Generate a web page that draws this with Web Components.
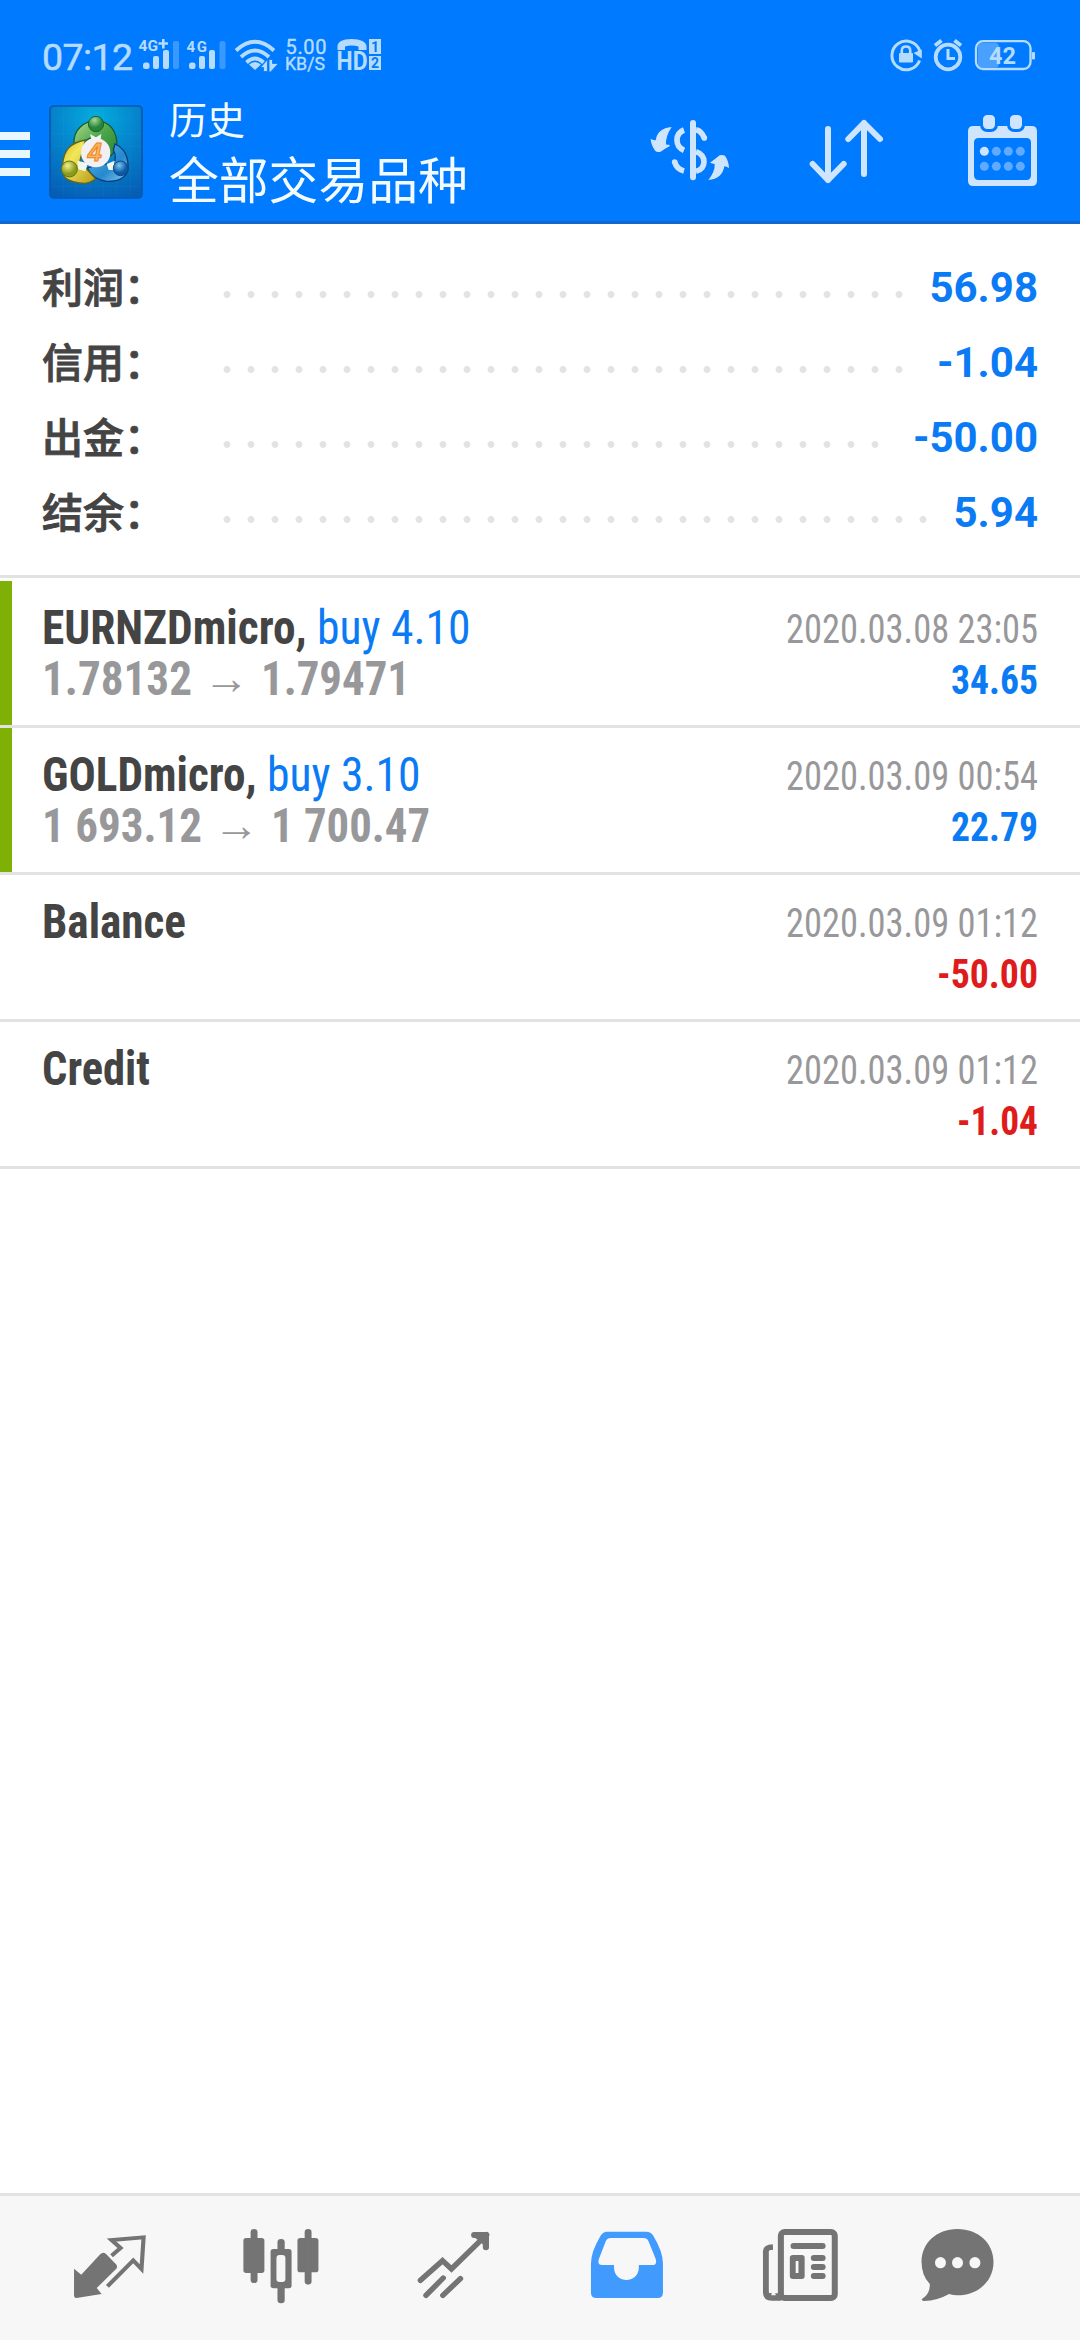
<!DOCTYPE html>
<html lang="zh-CN">
<head>
<meta charset="utf-8">
<title>历史</title>
<style>
html,body{margin:0;padding:0;background:#fff}
body{width:1080px;height:2340px;overflow:hidden;font-family:Roboto,"Noto Sans CJK SC",sans-serif}
</style>
</head>
<body>
<history-app></history-app>
<script>
const mount=(el,html)=>{el.attachShadow({mode:'open'}).innerHTML=html;};

customElements.define('status-bar',class extends HTMLElement{
constructor(){super();mount(this,`<style>
:host{display:flex;height:90px;color:#b5dcff;font-family:Roboto,sans-serif}
svg{display:block;height:90px;flex:none}
.gap{flex:1}
text{font-family:Roboto,sans-serif;fill:currentColor}
</style>
<svg width="136" viewBox="0 0 136 90"><text x="42" y="69.5" font-size="37.5" textLength="91" stroke="currentColor" stroke-width=".5">07:12</text></svg>
<svg width="48" viewBox="136 0 48 90" fill="currentColor"><text x="138.5" y="51" font-size="15" font-weight="700" textLength="19.500" lengthAdjust="spacingAndGlyphs">4G</text><path d="M158.500 43.500H168M163.300 39V48.500" stroke="currentColor" stroke-width="2.600"/>
<rect x="143" y="62.5" width="6.5" height="6.5" rx="2.5"/><rect x="153" y="56" width="6" height="13" rx="2"/><rect x="163" y="50" width="6" height="19" rx="2"/><rect x="173" y="41" width="6" height="28" rx="2" fill="#3a99ff"/></svg>
<svg width="47" viewBox="184 0 47 90" fill="currentColor"><text x="186.500" y="51.500" font-size="15" font-weight="700" textLength="20.500">4G</text>
<rect x="189" y="62.500" width="6.500" height="6.500" rx="2.500"/><rect x="199" y="56" width="6" height="13" rx="2"/><rect x="209" y="50" width="6" height="19" rx="2"/><rect x="219.500" y="41" width="6" height="28" rx="2" fill="#3a99ff"/></svg>
<svg width="52" viewBox="231 0 52 90" fill="none" stroke="currentColor" stroke-width="3.800"><path d="M236 50.500Q255 33 274 50.500M241 57Q255 44 269 57M246.500 62.500Q255 54.500 263.500 62.500"/><path d="M249 64.500Q255 59.500 261 64.500L255 70Z" fill="currentColor" stroke="none"/><path d="M260.500 67.500L267.500 59.500V71.500H263.500V67.500ZM269 59.500H272.500V63.500H278.500L270.500 72H269Z" fill="currentColor" stroke="#007aff" stroke-width=".8"/></svg>
<svg width="51" viewBox="283 0 51 90"><text x="285.500" y="53.500" font-size="20" textLength="41" stroke="currentColor" stroke-width=".4">5.00</text><text x="285" y="70" font-size="18" textLength="40" lengthAdjust="spacingAndGlyphs" stroke="currentColor" stroke-width=".4">KB/S</text></svg>
<svg width="60" viewBox="334 0 60 90" fill="currentColor"><path d="M337.500 50V46C338 42 342 39 351.500 39S366 42 366.500 46V50H358.500V46.500Q351.500 44.500 345 46.500V50Z"/>
<text x="336.500" y="70" font-size="25" font-weight="700" textLength="31" lengthAdjust="spacingAndGlyphs">HD</text><rect x="369" y="39" width="12" height="15"/><rect x="369" y="56" width="12" height="14"/><text x="371" y="51.500" font-size="14" font-weight="700" style="fill:#007aff">1</text><text x="371" y="68" font-size="14" font-weight="700" style="fill:#007aff">2</text></svg>
<div class="gap"></div>
<svg width="40" viewBox="886 0 40 90" fill="none" stroke="currentColor" stroke-width="3"><path d="M919.800 51A14.300 14.300 0 1 0 919.600 60.500"/><path d="M913.500 53L921.800 58.500V49.500Z" fill="currentColor" stroke="none"/><rect x="899" y="53" width="14" height="9.500" rx="1" fill="currentColor" stroke="none"/><path d="M901.800 54V50.500Q901.800 46.500 906 46.500T910.200 50.500V54" stroke-width="2.600"/></svg>
<svg width="44" viewBox="926 0 44 90" fill="none" stroke="currentColor" stroke-width="3.800"><circle cx="948" cy="57" r="12.300"/><path d="M935 45.500L941.500 40.500M954.500 40.500L961 45.500"/><path d="M948 49V58.500H955" stroke-width="3"/></svg>
<svg width="110" viewBox="970 0 110 90"><rect x="978" y="43" width="21" height="24.500" rx="4" fill="#4aa0ff"/><rect x="976" y="41.200" width="54.500" height="27.800" rx="7" fill="none" stroke="currentColor" stroke-width="2.300"/><rect x="1032" y="52" width="3" height="7.500" rx="1" fill="currentColor"/><text x="989" y="64" font-size="23" font-weight="700" textLength="27" lengthAdjust="spacingAndGlyphs">42</text></svg>`);}
});

customElements.define('app-logo',class extends HTMLElement{
constructor(){super();mount(this,`<style>:host{display:block;width:94px;height:94px}svg{display:block}</style>
<svg width="94" height="94" viewBox="147 45 282 282">
<defs><radialGradient id="b" cx=".5" cy=".12" r=".95"><stop offset="0" stop-color="#05addf"/><stop offset=".45" stop-color="#0486cd"/><stop offset="1" stop-color="#055db5"/></radialGradient>
<linearGradient id="g" x2="1" y2="1"><stop offset="0" stop-color="#b4dc91"/><stop offset=".5" stop-color="#4ca64a"/><stop offset="1" stop-color="#2b8134"/></linearGradient>
<linearGradient id="y" x2="1" y2="1"><stop offset="0" stop-color="#d0ba20"/><stop offset=".35" stop-color="#f2e75b"/><stop offset="1" stop-color="#b59b17"/></linearGradient>
<linearGradient id="u" x2="1" y2="1"><stop offset="0" stop-color="#58b7ea"/><stop offset=".6" stop-color="#2788ce"/><stop offset="1" stop-color="#81cbf0"/></linearGradient>
<radialGradient id="gh" cx=".4" cy=".25"><stop offset="0" stop-color="#a9d99b"/><stop offset="1" stop-color="#27853a"/></radialGradient>
<radialGradient id="yh" cx=".4" cy=".3"><stop offset="0" stop-color="#f6f08a"/><stop offset="1" stop-color="#8a9b1c"/></radialGradient>
<radialGradient id="uh" cx=".4" cy=".3"><stop offset="0" stop-color="#7dc7f0"/><stop offset="1" stop-color="#0b5aa5"/></radialGradient></defs>
<rect x="150" y="48" width="276" height="276" rx="12" fill="url(#b)" stroke="#0759a8" stroke-width="5"/>
<path d="M190 52V320M230 52V320M270 52V320M310 52V320M350 52V320M390 52V320M154 90H422M154 130H422M154 170H422M154 210H422M154 250H422M154 290H422" stroke="#fff" stroke-opacity=".06" stroke-width="2"/>
<path d="M222 160C220 120 250 94 288 92C330 94 354 125 350 172Q340 196 318 206L300 145Q270 135 246 162Z" fill="url(#g)" stroke="#165d31" stroke-width="4"/>
<path d="M345 162C378 176 386 205 384 240Q372 276 320 274Q280 270 262 234L300 220L340 225Q352 200 340 180Z" fill="url(#u)" stroke="#0a3f78" stroke-width="4"/>
<path d="M256 150C212 158 190 180 188 225L194 262Q214 280 256 280Q276 276 286 266L250 226L240 212Z" fill="url(#y)" stroke="#65651a" stroke-width="4"/>
<path d="M232 212L264 220L256 244L235 238ZM320 222L344 212L340 240L326 240ZM270 132L288 142L304 132L302 148H274Z" fill="#eef8ef"/>
<circle cx="288" cy="102" r="23" fill="url(#gh)" stroke="#16652e" stroke-width="3"/>
<circle cx="208" cy="237" r="24" fill="url(#yh)" stroke="#647019" stroke-width="3"/>
<circle cx="362" cy="235" r="22" fill="url(#uh)" stroke="#0a4b8f" stroke-width="3"/>
<circle cx="287" cy="188" r="44" fill="#f3f0f3"/>
<text x="263" y="214" font-family="Liberation Sans,sans-serif" font-size="76" font-weight="700" font-style="italic" fill="#fab65a" stroke="#ee8325" stroke-width="3">4</text>
</svg>`);}
});

customElements.define('app-header',class extends HTMLElement{
constructor(){super();mount(this,`<style>
:host{display:block;height:224px;box-sizing:border-box;background:#007aff;border-bottom:3px solid #1267cf}
.row{display:flex;height:131px}
.menu{display:flex;flex-direction:column;gap:10px;padding-top:42px;width:49px}
.menu i{display:block;width:30px;height:8px;background:#e9f7ff}
app-logo{margin-top:15px}
.t{margin-left:26px;flex:1;color:#f4fbff;font-family:"Noto Sans CJK SC",sans-serif;white-space:nowrap;display:flex;flex-direction:column}
.a{font-size:38px;line-height:50px;padding-top:3px}
.b{font-size:49.800px;line-height:60px;padding-top:4px}
svg{display:block;flex:none}
</style>
<status-bar></status-bar>
<div class="row"><div class="menu"><i></i><i></i><i></i></div><app-logo></app-logo>
<div class="t"><div class="a">历史</div><div class="b">全部交易品种</div></div>
<svg width="150" height="126" viewBox="0 -15 450 378" fill="#cfe5fd"><rect x="210" y="75" width="18" height="181" rx="9"/><path d="M192 105C164 116 164 154 192 166M228 104Q244 107 253 129M164 201Q170 222 192 228M228 170C260 179 260 222 228 229" fill="none" stroke="#cfe5fd" stroke-width="17"/><circle cx="253" cy="129" r="8.500"/><circle cx="164" cy="201" r="8.500"/>
<path d="M155 96Q112 100 107 136Q100 136 92 131Q93 150 106 168Q112 173 122 170Q136 160 151 152Q144 148 138 149Q136 125 155 96ZM265 255Q307 252 313 214Q320 214 327 219Q326 198 315 182Q308 178 299 181Q286 192 270 203Q278 206 284 207Q286 228 265 255Z"/></svg>
<svg width="150" height="126" viewBox="450 -15 450 378" fill="none" stroke="#cfe5fd" stroke-width="18" stroke-linecap="round" stroke-linejoin="round"><path d="M624 102V255M578 207L624 255L671 207M732 237V84M685 132L732 84L780 132"/></svg>
<svg width="160" height="126" viewBox="900 -15 480 378" style="margin-right:0"><path fill="#cfe5fd" fill-rule="evenodd" d="M1060 93H1235Q1251 93 1251 109V257Q1251 273 1235 273H1060Q1044 273 1044 257V109Q1044 93 1060 93ZM1076 129Q1062 129 1062 143V241Q1062 255 1076 255H1219Q1233 255 1233 241V143Q1233 129 1219 129Z"/><g fill="#cfe5fd" stroke="#007aff" stroke-width="9"><rect x="1084.500" y="55.500" width="45" height="51" rx="17"/><rect x="1165.500" y="55.500" width="45" height="51" rx="17"/></g><circle cx="1093" cy="169" r="13.500" fill="#cfe5fd"/><g fill="#60abff"><circle cx="1129" cy="169" r="13.500"/><circle cx="1165" cy="169" r="13.500"/><circle cx="1201" cy="169" r="13.500"/><circle cx="1093" cy="214" r="13.500"/><circle cx="1129" cy="214" r="13.500"/><circle cx="1165" cy="214" r="13.500"/><circle cx="1201" cy="214" r="13.500"/></g></svg></div>`);}
});

customElements.define('summary-row',class extends HTMLElement{
constructor(){super();mount(this,`<style>
:host{display:flex;height:75px;align-items:center;padding:0 42px;box-sizing:border-box}
.l{width:173px;padding-bottom:6px;font:500 41px/60px "Noto Sans CJK SC",sans-serif;color:#444;-webkit-text-stroke:.9px #444;white-space:nowrap}
.d{height:7px;margin-top:14px;background:radial-gradient(circle at 12px 3.500px,#e3e3e3 3px,transparent 3.900px) 0 0/24px 7px repeat-x;width:calc(24px*var(--n))}
.v{margin-left:auto;font:700 42px/60px Roboto,sans-serif;color:#0b7bf5}
</style><div class="l"><slot></slot></div><div class="d"></div><div class="v"></div>`);}
connectedCallback(){this.style.setProperty('--n',this.getAttribute('dots'));this.shadowRoot.querySelector('.v').textContent=this.getAttribute('value');}
});

customElements.define('deal-row',class extends HTMLElement{
connectedCallback(){
const a=n=>this.getAttribute(n);
const f=(k,cls)=>a(k)?`<fit-text class="${cls}" w="${a(k+'-w')}">${a(k)}</fit-text>`:'';
mount(this,`<style>
:host{display:grid;grid-template-columns:12px 1fr;grid-template-rows:144px 3px}
:host([trade]) .bar{background:#7fb006}
:host([first]) .bar{margin-top:3px}
:host([first]){margin-top:0}
.line{grid-column:1/3;background:#e2e2e2}
.box{display:flex;justify-content:space-between;padding:21px 42px 0 30px}
.left,.right{display:flex;flex-direction:column}
.right{align-items:flex-end;padding-top:2px}
.r{display:flex;height:51px}
.s{font:700 48px/51px Roboto;color:#444}
.k{font:400 48px/51px Roboto;color:#0b7bf5}
.p{font:700 48px/51px Roboto;color:#98989b}
.ar{width:69px;text-align:center;font:400 46px/51px "Liberation Sans";color:#98989b}
.dt{font:400 40px/51px Roboto;color:#98989b}
.v{font:700 40px/51px Roboto;color:#0b7bf5}
.v.neg{color:#de1c1c}
</style><div class="bar"></div><div class="box"><div class="left"><div class="r">${f('name','s')}${f('side','k')}</div>
<div class="r">${a('from')?f('from','p')+'<div class="ar">→</div>'+f('to','p'):''}</div></div>
<div class="right"><div class="r">${f('date','dt')}</div><div class="r">${f('value','v'+(a('value')[0]==='-'?' neg':''))}</div></div></div><div class="line"></div>`);}
});

customElements.define('tab-bar',class extends HTMLElement{
constructor(){super();mount(this,`<style>
:host{display:flex;height:147px;box-sizing:border-box;border-top:3px solid #e2e2e2;background:#f7f7f7;color:#747474}
svg{display:block;height:144px}
</style>
<svg width="158.400" viewBox="0 48 460 432" preserveAspectRatio="none"><path fill="currentColor" d="M215 266L236 284L291 223Q299 214 308 222L337 253Q343 260 337 267L281 324L295 342L222 354Q215 354 215 347Z"/><path fill="none" stroke="currentColor" stroke-width="12" d="M324 227L350 204L324 180L417 172L411 267L387 241L312 319"/></svg>
<svg width="206.600" viewBox="460 48 600 432" preserveAspectRatio="none" fill="currentColor"><rect x="708" y="174" width="61" height="105" rx="8"/><rect x="729" y="147" width="20" height="162" rx="10"/><rect x="865" y="174" width="61" height="103" rx="8"/><rect x="886" y="147" width="20" height="167" rx="10"/><rect x="807" y="177" width="21" height="193" rx="10"/><rect x="787" y="207" width="61" height="118" rx="8"/><rect x="804" y="225" width="26" height="81" rx="9" fill="#f7f7f7"/></svg>
<svg width="175" viewBox="1060 48 508 432" preserveAspectRatio="none" fill="none" stroke="currentColor" stroke-width="16" stroke-linecap="round"><path d="M1221 301L1285 242L1311 267L1413 164M1237 346L1287 294M1286 346L1337 296"/><path d="M1377 165H1411V202" stroke-width="18" stroke-linejoin="round"/><path d="M1390 172L1404 184V172Z"/></svg>
<svg width="172.200" viewBox="0 48 500 432" preserveAspectRatio="none"><path fill="#419bff" fill-rule="evenodd" d="M195 155H309Q322 155 329 167Q357 215 357 250V338Q357 354 341 354H164Q148 354 148 338V250Q148 215 176 167Q183 155 195 155ZM206 174Q195 174 191 184L171 237Q166 255 180 255H215V264C217 312 285 312 287 264V255H326Q341 255 336 237L315 184Q311 174 300 174Z"/></svg>
<svg width="172.200" viewBox="500 48 500 432" preserveAspectRatio="none" fill="none" stroke="currentColor"><rect x="700" y="156" width="156.500" height="198" rx="11" stroke-width="17.500"/><path d="M677 201Q656 202 656.500 214V338Q657 354 674 354H701M691 340Q691 345 686 347M665 340Q666 346 672 347" stroke-width="17"/><g fill="currentColor" stroke="none"><rect x="728" y="189" width="102" height="18" rx="9"/><path fill-rule="evenodd" d="M735 225H761Q769 225 769 233V289Q769 297 761 297H735Q726 297 726 289V233Q726 225 735 225ZM743 243V279H751V243Z"/><rect x="787" y="225" width="43" height="18" rx="9"/><rect x="787" y="252" width="43" height="18" rx="9"/><rect x="787" y="279" width="43" height="18" rx="9"/></g></svg>
<svg width="195.600" viewBox="1000 48 568 432" preserveAspectRatio="none"><path fill="currentColor" d="M1213 147C1275 147 1318 190 1318 246S1275 346 1213 346Q1201 346 1189 342Q1155 362 1116 363Q1105 361 1113 355Q1134 341 1133 312Q1109 287 1109 246C1109 190 1152 147 1213 147Z"/><g fill="#f7f7f7"><ellipse cx="1164" cy="248" rx="16" ry="17"/><ellipse cx="1213.500" cy="248" rx="16" ry="17"/><ellipse cx="1264" cy="248" rx="16" ry="17"/></g></svg>`);}
});

customElements.define('history-app',class extends HTMLElement{
constructor(){super();mount(this,`<style>
:host{display:flex;flex-direction:column;width:1080px;height:2340px;background:#fff}
.sum{height:354px;box-sizing:border-box;padding-top:26px;border-bottom:3px solid #e2e2e2}
.list{flex:1;padding-top:3px}
</style>
<app-header></app-header>
<div class="sum"><summary-row dots="29" value="56.98">利润：</summary-row><summary-row dots="29" value="-1.04">信用：</summary-row><summary-row dots="28" value="-50.00">出金：</summary-row><summary-row dots="30" value="5.94">结余：</summary-row></div>
<div class="list">
<deal-row trade name="EURNZDmicro, " name-w="275" side="buy 4.10" side-w="153.500" from="1.78132" from-w="150" to="1.79471" to-w="149" date="2020.03.08 23:05" date-w="252" value="34.65" value-w="87"></deal-row>
<deal-row trade name="GOLDmicro, " name-w="225" side="buy 3.10" side-w="153.500" from="1 693.12" from-w="160" to="1 700.47" to-w="159" date="2020.03.09 00:54" date-w="252" value="22.79" value-w="87"></deal-row>
<deal-row name="Balance" name-w="144" date="2020.03.09 01:12" date-w="252" value="-50.00" value-w="101"></deal-row>
<deal-row name="Credit" name-w="108" date="2020.03.09 01:12" date-w="252" value="-1.04" value-w="81"></deal-row>
</div>
<tab-bar></tab-bar>`);}
});

/* Single line of text squeezed horizontally to the width given in "w". */
customElements.define('fit-text',class extends HTMLElement{
connectedCallback(){
mount(this,`<style>:host{display:block;flex:none}span{display:inline-block;white-space:pre;transform-origin:0 50%}</style><span><slot></slot></span>`);
const s=this.shadowRoot.querySelector('span'),w=+this.getAttribute('w');
s.style.fontStretch='75%';
const n=s.getBoundingClientRect().width;
this.style.width=w+'px';
s.style.transform=`scaleX(${w/n})`;
}
});
</script>
</body>
</html>
